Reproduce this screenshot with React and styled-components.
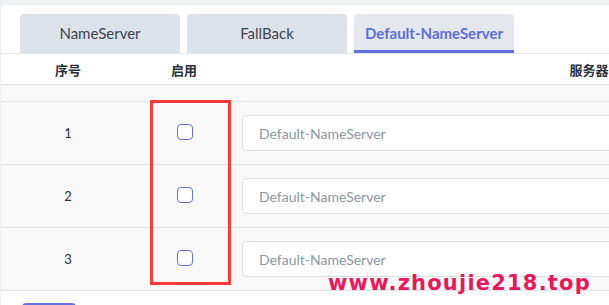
import styled, { createGlobalStyle } from 'styled-components';

const Global = createGlobalStyle`
	body {
		margin: 0;
		background: #eef0f4;
		overflow: hidden;
		font-family: Lato, "Noto Sans CJK SC", sans-serif;
	}
`;

const Page = styled.div`
	padding: 5px 0 0 1px;
	width: 100vw;
	height: 100vh;
	box-sizing: border-box;
	overflow: hidden;
`;

const Card = styled.div`
	position: relative;
	background: #ffffff;
	border-top-left-radius: 6px;
	padding-top: 9px;
	height: 100%;
	box-sizing: border-box;
	overflow: hidden;
`;

const Tabs = styled.div`
	display: flex;
	gap: 7px;
	padding-left: 19px;
	border-bottom: 1px solid #e3e6eb;
`;

const Tab = styled.div`
	width: 160px;
	flex-shrink: 0;
	height: 39px;
	box-sizing: border-box;
	display: flex;
	align-items: center;
	justify-content: center;
	background: ${(p) => (p.$active ? '#e4e8ee' : '#dce2e9')};
	border-radius: 4px 4px 0 0;
	font-size: 15px;
	font-weight: ${(p) => (p.$active ? 700 : 400)};
	color: ${(p) => (p.$active ? '#5d6ee0' : '#3d4450')};
	border-bottom: 3px solid ${(p) => (p.$active ? '#5d6ee0' : 'transparent')};
	padding-top: 1px;
`;

const Table = styled.div`
	display: grid;
	grid-template-columns: 134px 98px 712px;
`;

const Head = styled.div`
	height: 30px;
	display: flex;
	align-items: center;
	justify-content: center;
	font-size: 13px;
	font-weight: 700;
	color: #2a3140;
	font-family: "Noto Sans CJK SC", sans-serif;
	border-bottom: 1px solid #dddfe3;
`;

const Spacer = styled.div`
	grid-column: 1 / -1;
	height: 16px;
	background: #f8f8f8;
	border-bottom: 1px solid #e3e4e6;
`;

const Cell = styled.div`
	height: 62px;
	display: flex;
	align-items: center;
	justify-content: ${(p) => (p.$left ? 'flex-start' : 'center')};
	padding-left: ${(p) => (p.$left ? '9px' : '0')};
	background: #f8f8f8;
	border-bottom: 1px solid #e1e2e4;
	font-size: 13px;
	color: #2a3140;
`;

const Check = styled.span`
	width: 16px;
	height: 16px;
	box-sizing: border-box;
	border: 1px solid #6372e0;
	border-radius: 4px;
	background: #ffffff;
	margin-left: 2px;
	margin-top: -3px;
`;

const Input = styled.input`
	width: 600px;
	height: 36px;
	box-sizing: border-box;
	border: 1px solid #dcdfe5;
	border-radius: 4px;
	background: #ffffff;
	padding: 0 16px;
	font-family: Lato, sans-serif;
	font-size: 14px;
	outline: none;
	&::placeholder {
		color: #8b97a6;
	}
`;

const Button = styled.div`
	margin: 12px 0 0 21px;
	width: 54px;
	height: 30px;
	border-radius: 4px;
	background: #6373e0;
`;

const Highlight = styled.div`
	position: absolute;
	left: 149px;
	top: 95px;
	width: 81px;
	height: 185px;
	box-sizing: border-box;
	border: 3px solid #ff3838;
	pointer-events: none;
`;

const Watermark = styled.div`
	position: absolute;
	left: 327px;
	top: 266px;
	font-family: "DejaVu Sans", sans-serif;
	font-weight: 700;
	font-size: 21px;
	color: #e9175c;
	letter-spacing: 1.2px;
	pointer-events: none;
`;

const rows = [1, 2, 3];

export default function App() {
	return (
		<Page>
			<Global />
			<Card>
				<Tabs>
					<Tab>NameServer</Tab>
					<Tab>FallBack</Tab>
					<Tab $active>Default-NameServer</Tab>
				</Tabs>
				<Table>
					<Head>序号</Head>
					<Head>启用</Head>
					<Head>服务器</Head>
					<Spacer />
					{rows.map((n) => (
						<>
							<Cell key={`n${n}`}>{n}</Cell>
							<Cell key={`c${n}`}>
								<Check />
							</Cell>
							<Cell key={`i${n}`} $left>
								<Input placeholder="Default-NameServer" />
							</Cell>
						</>
					))}
				</Table>
				<Button />
				<Highlight />
				<Watermark>www.zhoujie218.top</Watermark>
			</Card>
		</Page>
	);
}
